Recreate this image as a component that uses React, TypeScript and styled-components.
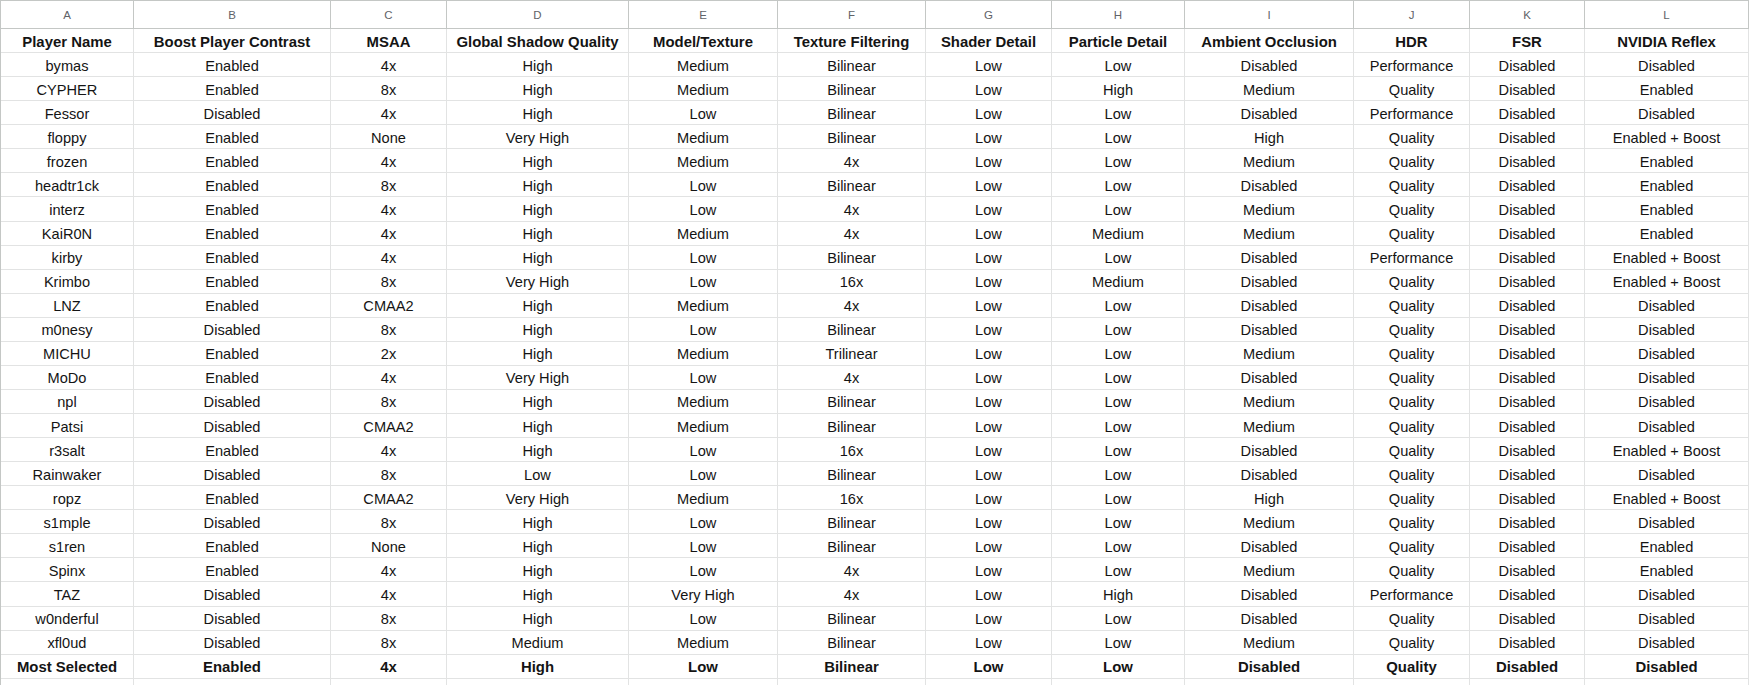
import React from "react";
import styled, { createGlobalStyle } from "styled-components";

const Global = createGlobalStyle`
  html, body { margin: 0; padding: 0; background: #ffffff; }
  body { font-family: "Liberation Sans", Arial, sans-serif; }
`;

const widths = [133, 197, 116, 182, 149, 148, 126, 133, 169, 116, 115, 164];
const letters = ["A", "B", "C", "D", "E", "F", "G", "H", "I", "J", "K", "L"];

const headers = [
  "Player Name",
  "Boost Player Contrast",
  "MSAA",
  "Global Shadow Quality",
  "Model/Texture",
  "Texture Filtering",
  "Shader Detail",
  "Particle Detail",
  "Ambient Occlusion",
  "HDR",
  "FSR",
  "NVIDIA Reflex",
];

const raw = `bymas|Enabled|4x|High|Medium|Bilinear|Low|Low|Disabled|Performance|Disabled|Disabled
CYPHER|Enabled|8x|High|Medium|Bilinear|Low|High|Medium|Quality|Disabled|Enabled
Fessor|Disabled|4x|High|Low|Bilinear|Low|Low|Disabled|Performance|Disabled|Disabled
floppy|Enabled|None|Very High|Medium|Bilinear|Low|Low|High|Quality|Disabled|Enabled + Boost
frozen|Enabled|4x|High|Medium|4x|Low|Low|Medium|Quality|Disabled|Enabled
headtr1ck|Enabled|8x|High|Low|Bilinear|Low|Low|Disabled|Quality|Disabled|Enabled
interz|Enabled|4x|High|Low|4x|Low|Low|Medium|Quality|Disabled|Enabled
KaiR0N|Enabled|4x|High|Medium|4x|Low|Medium|Medium|Quality|Disabled|Enabled
kirby|Enabled|4x|High|Low|Bilinear|Low|Low|Disabled|Performance|Disabled|Enabled + Boost
Krimbo|Enabled|8x|Very High|Low|16x|Low|Medium|Disabled|Quality|Disabled|Enabled + Boost
LNZ|Enabled|CMAA2|High|Medium|4x|Low|Low|Disabled|Quality|Disabled|Disabled
m0nesy|Disabled|8x|High|Low|Bilinear|Low|Low|Disabled|Quality|Disabled|Disabled
MICHU|Enabled|2x|High|Medium|Trilinear|Low|Low|Medium|Quality|Disabled|Disabled
MoDo|Enabled|4x|Very High|Low|4x|Low|Low|Disabled|Quality|Disabled|Disabled
npl|Disabled|8x|High|Medium|Bilinear|Low|Low|Medium|Quality|Disabled|Disabled
Patsi|Disabled|CMAA2|High|Medium|Bilinear|Low|Low|Medium|Quality|Disabled|Disabled
r3salt|Enabled|4x|High|Low|16x|Low|Low|Disabled|Quality|Disabled|Enabled + Boost
Rainwaker|Disabled|8x|Low|Low|Bilinear|Low|Low|Disabled|Quality|Disabled|Disabled
ropz|Enabled|CMAA2|Very High|Medium|16x|Low|Low|High|Quality|Disabled|Enabled + Boost
s1mple|Disabled|8x|High|Low|Bilinear|Low|Low|Medium|Quality|Disabled|Disabled
s1ren|Enabled|None|High|Low|Bilinear|Low|Low|Disabled|Quality|Disabled|Enabled
Spinx|Enabled|4x|High|Low|4x|Low|Low|Medium|Quality|Disabled|Enabled
TAZ|Disabled|4x|High|Very High|4x|Low|High|Disabled|Performance|Disabled|Disabled
w0nderful|Disabled|8x|High|Low|Bilinear|Low|Low|Disabled|Quality|Disabled|Disabled
xfl0ud|Disabled|8x|Medium|Medium|Bilinear|Low|Low|Medium|Quality|Disabled|Disabled`;

const rows = raw.split("\n").map((l) => l.split("|"));
const summary = ["Most Selected", "Enabled", "4x", "High", "Low", "Bilinear", "Low", "Low", "Disabled", "Quality", "Disabled", "Disabled"];

const Sheet = styled.div`
  display: grid;
  grid-template-columns: ${widths.map((w) => `${w}px`).join(" ")};
  grid-template-rows: 28px;
  grid-auto-rows: 24.07px;
  width: 1749px;
  border-left: 1px solid #c4c7c5;
  border-top: 1px solid #c4c7c5;
  box-sizing: border-box;
`;

const LetterCell = styled.div`
  box-sizing: border-box;
  border-right: 1px solid #c4c7c5;
  border-bottom: 1px solid #c4c7c5;
  display: flex;
  align-items: center;
  justify-content: center;
  font-size: 11.5px;
  color: #5f6368;
  background: #ffffff;
`;

const Cell = styled.div<{ $bold?: boolean }>`
  box-sizing: border-box;
  border-right: 1px solid #e2e3e3;
  border-bottom: 1px solid #e2e3e3;
  display: flex;
  align-items: center;
  justify-content: center;
  font-size: ${(p) => (p.$bold ? "14.9px" : "14.6px")};
  font-weight: ${(p) => (p.$bold ? 700 : 400)};
  color: #141414;
  white-space: nowrap;
  overflow: hidden;
  padding-top: 2px;
`;

export default function App() {
  return (
    <>
      <Global />
      <Sheet>
        {letters.map((l) => (
          <LetterCell key={l}>{l}</LetterCell>
        ))}
        {headers.map((h, i) => (
          <Cell key={"h" + i} $bold>
            {h}
          </Cell>
        ))}
        {rows.map((r, ri) =>
          r.map((v, ci) => <Cell key={ri + "-" + ci}>{v}</Cell>)
        )}
        {summary.map((v, i) => (
          <Cell key={"s" + i} $bold>
            {v}
          </Cell>
        ))}
        {widths.map((_, i) => (
          <Cell key={"e" + i} />
        ))}
      </Sheet>
    </>
  );
}
